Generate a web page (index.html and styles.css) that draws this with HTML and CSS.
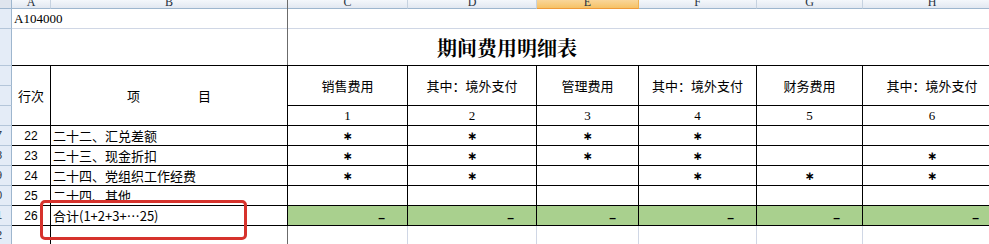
FILE: index.html
```html
<!DOCTYPE html>
<html lang="zh-CN">
<head>
<meta charset="utf-8">
<title>期间费用明细表</title>
<link rel="stylesheet" href="styles.css">
</head>
<body>
<div class="sheet">
  <div class="grid">
    <div class="corner"></div>
    <div class="ch"><span>A</span></div>
    <div class="ch"><span>B</span></div>
    <div class="ch"><span>C</span></div>
    <div class="ch"><span>D</span></div>
    <div class="ch sel"><span>E</span></div>
    <div class="ch"><span>F</span></div>
    <div class="ch"><span>G</span></div>
    <div class="ch"><span>H</span></div>

    <div class="rh"><span>1</span></div>
    <div class="cell span8 code">A104000</div>

    <div class="rh"><span>2</span></div>
    <div class="cell span8 title">期间费用明细表</div>

    <div class="rh"><span>3</span></div>
    <div class="cell t rs3 ctr">行次</div>
    <div class="cell t rs3 ctr item"><span>项</span><span>目</span></div>
    <div class="cell t rs2 ctr">销售费用</div>
    <div class="cell t rs2 ctr">其中：境外支付</div>
    <div class="cell t rs2 ctr">管理费用</div>
    <div class="cell t rs2 ctr">其中：境外支付</div>
    <div class="cell t rs2 ctr">财务费用</div>
    <div class="cell t rs2 ctr">其中：境外支付</div>

    <div class="rh"><span>4</span></div>

    <div class="rh"><span>5</span></div>
    <div class="cell t ctr num">1</div>
    <div class="cell t ctr num">2</div>
    <div class="cell t ctr num">3</div>
    <div class="cell t ctr num">4</div>
    <div class="cell t ctr num">5</div>
    <div class="cell t ctr num">6</div>

    <div class="rh"><span>17</span></div>
    <div class="cell t ctr no">22</div>
    <div class="cell t name">二十二、汇兑差额</div>
    <div class="cell t ctr"><span class="star">∗</span></div>
    <div class="cell t ctr"><span class="star">∗</span></div>
    <div class="cell t ctr"><span class="star">∗</span></div>
    <div class="cell t ctr"><span class="star">∗</span></div>
    <div class="cell t"></div>
    <div class="cell t"></div>

    <div class="rh"><span>18</span></div>
    <div class="cell t ctr no">23</div>
    <div class="cell t name">二十三、现金折扣</div>
    <div class="cell t ctr"><span class="star">∗</span></div>
    <div class="cell t ctr"><span class="star">∗</span></div>
    <div class="cell t ctr"><span class="star">∗</span></div>
    <div class="cell t ctr"><span class="star">∗</span></div>
    <div class="cell t"></div>
    <div class="cell t ctr"><span class="star">∗</span></div>

    <div class="rh"><span>19</span></div>
    <div class="cell t ctr no">24</div>
    <div class="cell t name">二十四、党组织工作经费</div>
    <div class="cell t ctr"><span class="star">∗</span></div>
    <div class="cell t ctr"><span class="star">∗</span></div>
    <div class="cell t"></div>
    <div class="cell t ctr"><span class="star">∗</span></div>
    <div class="cell t ctr"><span class="star">∗</span></div>
    <div class="cell t ctr"><span class="star">∗</span></div>

    <div class="rh"><span>20</span></div>
    <div class="cell t ctr no">25</div>
    <div class="cell t name">二十四、其他</div>
    <div class="cell t"></div>
    <div class="cell t"></div>
    <div class="cell t"></div>
    <div class="cell t"></div>
    <div class="cell t"></div>
    <div class="cell t"></div>

    <div class="rh"><span>21</span></div>
    <div class="cell t ctr no">26</div>
    <div class="cell t name">合计(1+2+3+…25)</div>
    <div class="cell t sum"><span>–</span></div>
    <div class="cell t sum"><span>–</span></div>
    <div class="cell t sum"><span>–</span></div>
    <div class="cell t sum"><span>–</span></div>
    <div class="cell t sum"><span>–</span></div>
    <div class="cell t sum"><span>–</span></div>

    <div class="rh"><span>22</span></div>
    <div class="cell edge"></div>
    <div class="cell frz"></div>
    <div class="cell"></div>
    <div class="cell"></div>
    <div class="cell"></div>
    <div class="cell"></div>
    <div class="cell"></div>
    <div class="cell"></div>
  </div>
  <div class="freeze"></div>
  <div class="mark"></div>
</div>
</body>
</html>
```

FILE: styles.css
```css
html, body {
  margin: 0;
  padding: 0;
  background: #ffffff;
}

.sheet {
  position: relative;
  width: 989px;
  height: 244px;
  overflow: hidden;
  background: #ffffff;
}

.grid {
  display: grid;
  width: 1002px;
  grid-template-columns: 12px 39px 237px 120px 129px 102px 118px 106px 139px;
  grid-template-rows: 9px 20px 37px repeat(9, 20px);
}

.grid > div {
  box-sizing: border-box;
  min-width: 0;
  min-height: 0;
}

/* column header bar */
.corner {
  background: #dfe5ee;
  border-right: 1px solid #9eb6ce;
  border-bottom: 1px solid #9eb6ce;
}

.ch {
  display: flex;
  align-items: flex-end;
  justify-content: center;
  overflow: hidden;
  background: linear-gradient(#f4f7fb, #e2e8f1);
  border-right: 1px solid #c6d2e0;
  border-bottom: 1px solid #9eb6ce;
  font: 12px "Liberation Serif", serif;
  color: #27313d;
}

.ch span {
  line-height: 1;
  margin-bottom: 0;
}

.ch.sel {
  background: linear-gradient(#f9d69a, #f6c266);
  border-right-color: #f0b250;
  border-bottom-color: #ee9a3a;
}

/* row headers */
.rh {
  display: flex;
  align-items: center;
  justify-content: flex-end;
  overflow: hidden;
  background: #e4ecf7;
  border-right: 1px solid #9eb6ce;
  border-bottom: 1px solid #b4c6da;
  font: 11px "Liberation Sans", sans-serif;
  color: #27313d;
}

.rh span {
  flex: 0 0 30px;
  text-align: center;
  line-height: 1;
}

/* cells */
.cell {
  display: flex;
  align-items: center;
  overflow: hidden;
  white-space: nowrap;
  border-right: 1px solid #d0d7e5;
  border-bottom: 1px solid #d0d7e5;
  font: 13px "Noto Sans CJK SC", sans-serif;
  line-height: 15px;
  color: #000000;
}

.t {
  border-right-color: #000000;
  border-bottom-color: #000000;
}

.span8 {
  grid-column: span 8;
  border-right: none;
}

.rs2 {
  grid-row: span 2;
}

.rs3 {
  grid-row: span 3;
}

.ctr {
  justify-content: center;
}

.code {
  padding-left: 2px;
  font: 13px "Liberation Serif", serif;
}

.title {
  justify-content: center;
  border-bottom-color: #000000;
  font-family: "Noto Serif CJK SC", "Noto Sans CJK SC", serif;
  font-size: 20px;
  font-weight: 700;
  line-height: 24px;
  padding-top: 1px;
}

.item {
  gap: 58px;
}

.num {
  font: 13px "Liberation Serif", serif;
}

.no {
  font: 12px "Liberation Sans", sans-serif;
}

.name {
  padding-left: 2px;
}

.star {
  font: 700 12px "DejaVu Sans", sans-serif;
  line-height: 1;
}

.sum {
  background: #a9d08e;
  justify-content: flex-end;
  padding-right: 22px;
  padding-top: 4px;
}

.sum span {
  font: 700 12px "Liberation Sans", sans-serif;
  line-height: 1;
}

.edge {
  border-right-color: #000000;
}

.frz {
  border-right-color: #6b6b6b;
}

/* frozen pane divider over the merged top rows */
.freeze {
  position: absolute;
  left: 287px;
  top: 0;
  width: 1px;
  height: 65px;
  background: #6b6b6b;
}

/* red highlight box */
.mark {
  position: absolute;
  left: 40px;
  top: 200px;
  width: 207px;
  height: 40px;
  box-sizing: border-box;
  border: 3px solid #d6322c;
  border-radius: 5px;
}
```
